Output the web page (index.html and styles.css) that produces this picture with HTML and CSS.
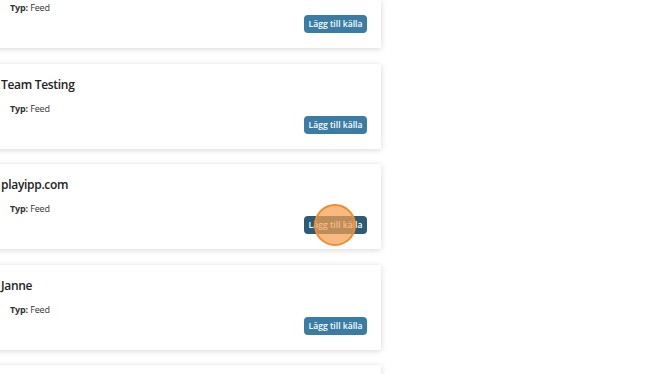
FILE: index.html
```html
<!DOCTYPE html>
<html lang="sv">
<head>
<meta charset="utf-8">
<link rel="stylesheet" href="styles.css">
</head>
<body>
<div class="list">
  <div class="card partial">
    <div class="meta"><b>Typ:</b> Feed</div>
    <div class="actions"><button class="btn">Lägg till källa</button></div>
  </div>
  <div class="card">
    <div class="title">Team Testing</div>
    <div class="meta"><b>Typ:</b> Feed</div>
    <div class="actions"><button class="btn">Lägg till källa</button></div>
  </div>
  <div class="card">
    <div class="title">playipp.com</div>
    <div class="meta"><b>Typ:</b> Feed</div>
    <div class="actions"><button class="btn hover">Lägg till källa<span class="cursor"></span></button></div>
  </div>
  <div class="card">
    <div class="title">Janne</div>
    <div class="meta"><b>Typ:</b> Feed</div>
    <div class="actions"><button class="btn">Lägg till källa</button></div>
  </div>
  <div class="card empty"></div>
</div>
</body>
</html>
```
FILE: styles.css
```css
html, body {
  margin: 0;
  padding: 0;
  background: #ffffff;
  overflow: hidden;
  height: 374px;
}
body {
  font-family: "Open Sans", "Liberation Sans", sans-serif;
  color: #2b2b2b;
}
.list {
  display: flex;
  flex-direction: column;
  gap: 15.5px;
  width: 401px;
  margin-left: -20px;
}
.card {
  background: #fff;
  box-shadow: 0 1px 6px rgba(0,0,0,0.16);
  padding: 12px 14px 15px 21px;
  height: 85px;
  box-sizing: border-box;
  display: flex;
  flex-direction: column;
  flex-shrink: 0;
}
.card.partial {
  height: 48px;
  padding-top: 1px;
}
.card.partial .meta {
  margin-top: 0;
}
.title {
  font-size: 12px;
  letter-spacing: -0.3px;
  font-weight: 600;
  line-height: 18px;
  color: #222;
}
.meta {
  margin-top: 8px;
  padding-left: 9px;
  font-size: 9px;
  letter-spacing: -0.15px;
  line-height: 14px;
  color: #333;
}
.meta b {
  font-weight: 700;
}
.actions {
  display: flex;
  justify-content: flex-end;
}
.btn {
  position: relative;
  height: 18px;
  width: 63px;
  padding: 0;
  border: none;
  border-radius: 4px;
  background: #3a7ca4;
  color: #fff;
  font-family: "Open Sans", "Liberation Sans", sans-serif;
  font-size: 8.6px;
  font-weight: 600;
  line-height: 18px;
  white-space: nowrap;
}
.btn.hover {
  background: #2a5b78;
}
.cursor {
  position: absolute;
  left: 10px;
  top: -12px;
  width: 38px;
  height: 38px;
  border-radius: 50%;
  background: rgba(247, 160, 80, 0.72);
  border: 2px solid #f08d2a;
}
```
